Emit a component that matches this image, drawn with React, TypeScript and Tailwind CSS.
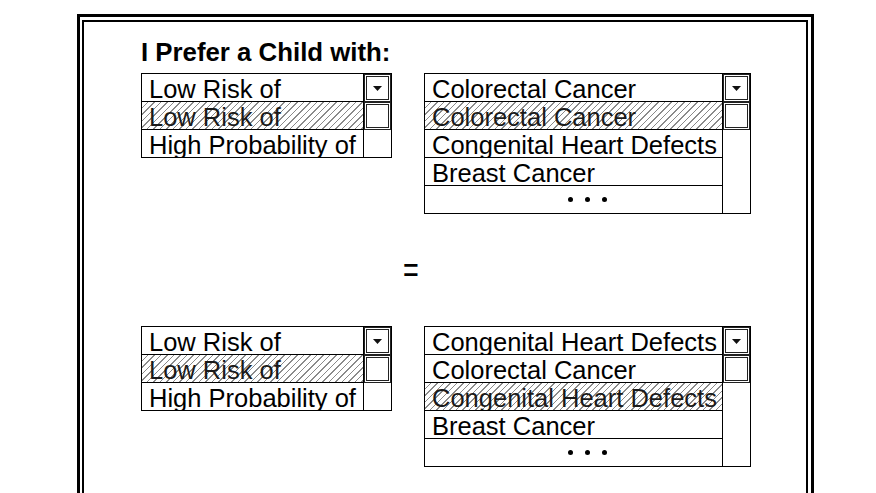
import clsx from 'clsx';

type Row = { label?: string; hatched?: boolean; dots?: boolean };

const DropButton = () => (
  <div className="h-[28px] border-[3px] border-double border-[#222] flex items-center justify-center bg-white">
    <svg width="9" height="5" viewBox="0 0 9 5" className="-ml-[1px]">
      <polygon points="0,0 9,0 4.5,5" fill="#111" />
    </svg>
  </div>
);

const ListBox = ({ wide, rows }: { wide?: boolean; rows: Row[] }) => {
  return (
    <div className={clsx('border border-black flex bg-white', wide ? 'w-[327px]' : 'w-[251px]')}>
      <div className="flex-1 flex flex-col">
        {rows.map((r, i) => (
          <div
            key={i}
            className={clsx(
              'border-black pl-[7px] pt-[1.5px] leading-[26px] whitespace-nowrap overflow-hidden',
              i === 0 ? 'h-[27px]' : 'h-[28px] border-t',
              r.hatched && 'text-[#1a1a1a] bg-[repeating-linear-gradient(135deg,transparent_0_3.6px,#8a8a8a_3.6px_4.6px)]'
            )}
          >
            {r.dots ? (
              <div className="h-full flex items-center justify-center gap-[12px] pl-[20px] pb-[1px]">
                <div className="w-[5px] h-[5px] rounded-full bg-black" />
                <div className="w-[5px] h-[5px] rounded-full bg-black" />
                <div className="w-[5px] h-[5px] rounded-full bg-black" />
              </div>
            ) : (
              r.label
            )}
          </div>
        ))}
      </div>
      {/* scroll column: drop button + thumb */}
      <div className="w-[28px] border-l border-black flex flex-col">
        <DropButton />
        <div className="h-[28px] border-[3px] border-double border-[#222] bg-white" />
      </div>
    </div>
  );
};

const riskRows: Row[] = [
  { label: 'Low Risk of' },
  { label: 'Low Risk of', hatched: true },
  { label: 'High Probability of' },
];

export default function App() {
  return (
    <div className="h-[493px] overflow-hidden bg-white text-black font-['Liberation_Sans',Arial,sans-serif] text-[25.5px]">
      <div className="ml-[77px] mt-[14px] w-[737px] h-[560px] border-[3px] border-black pt-[3px] pr-[3px] pl-[2px]">
        <div className="h-full border-2 border-black pl-[57px] pt-[16px]">
          <div className="font-bold text-[25.8px] leading-[28px]">I Prefer a Child with:</div>

          <div className="mt-[7px] flex items-start gap-[32px]">
            <ListBox rows={riskRows} />
            <ListBox
              wide
              rows={[
                { label: 'Colorectal Cancer' },
                { label: 'Colorectal Cancer', hatched: true },
                { label: 'Congenital Heart Defects' },
                { label: 'Breast Cancer' },
                { dots: true },
              ]}
            />
          </div>

          <div className="h-[112px] flex items-center pl-[262px]">
            <span className="inline-block text-[27px] leading-[28px] scale-y-[1.35]">=</span>
          </div>

          <div className="flex items-start gap-[32px]">
            <ListBox rows={riskRows} />
            <ListBox
              wide
              rows={[
                { label: 'Congenital Heart Defects' },
                { label: 'Colorectal Cancer' },
                { label: 'Congenital Heart Defects', hatched: true },
                { label: 'Breast Cancer' },
                { dots: true },
              ]}
            />
          </div>
        </div>
      </div>
    </div>
  );
}
